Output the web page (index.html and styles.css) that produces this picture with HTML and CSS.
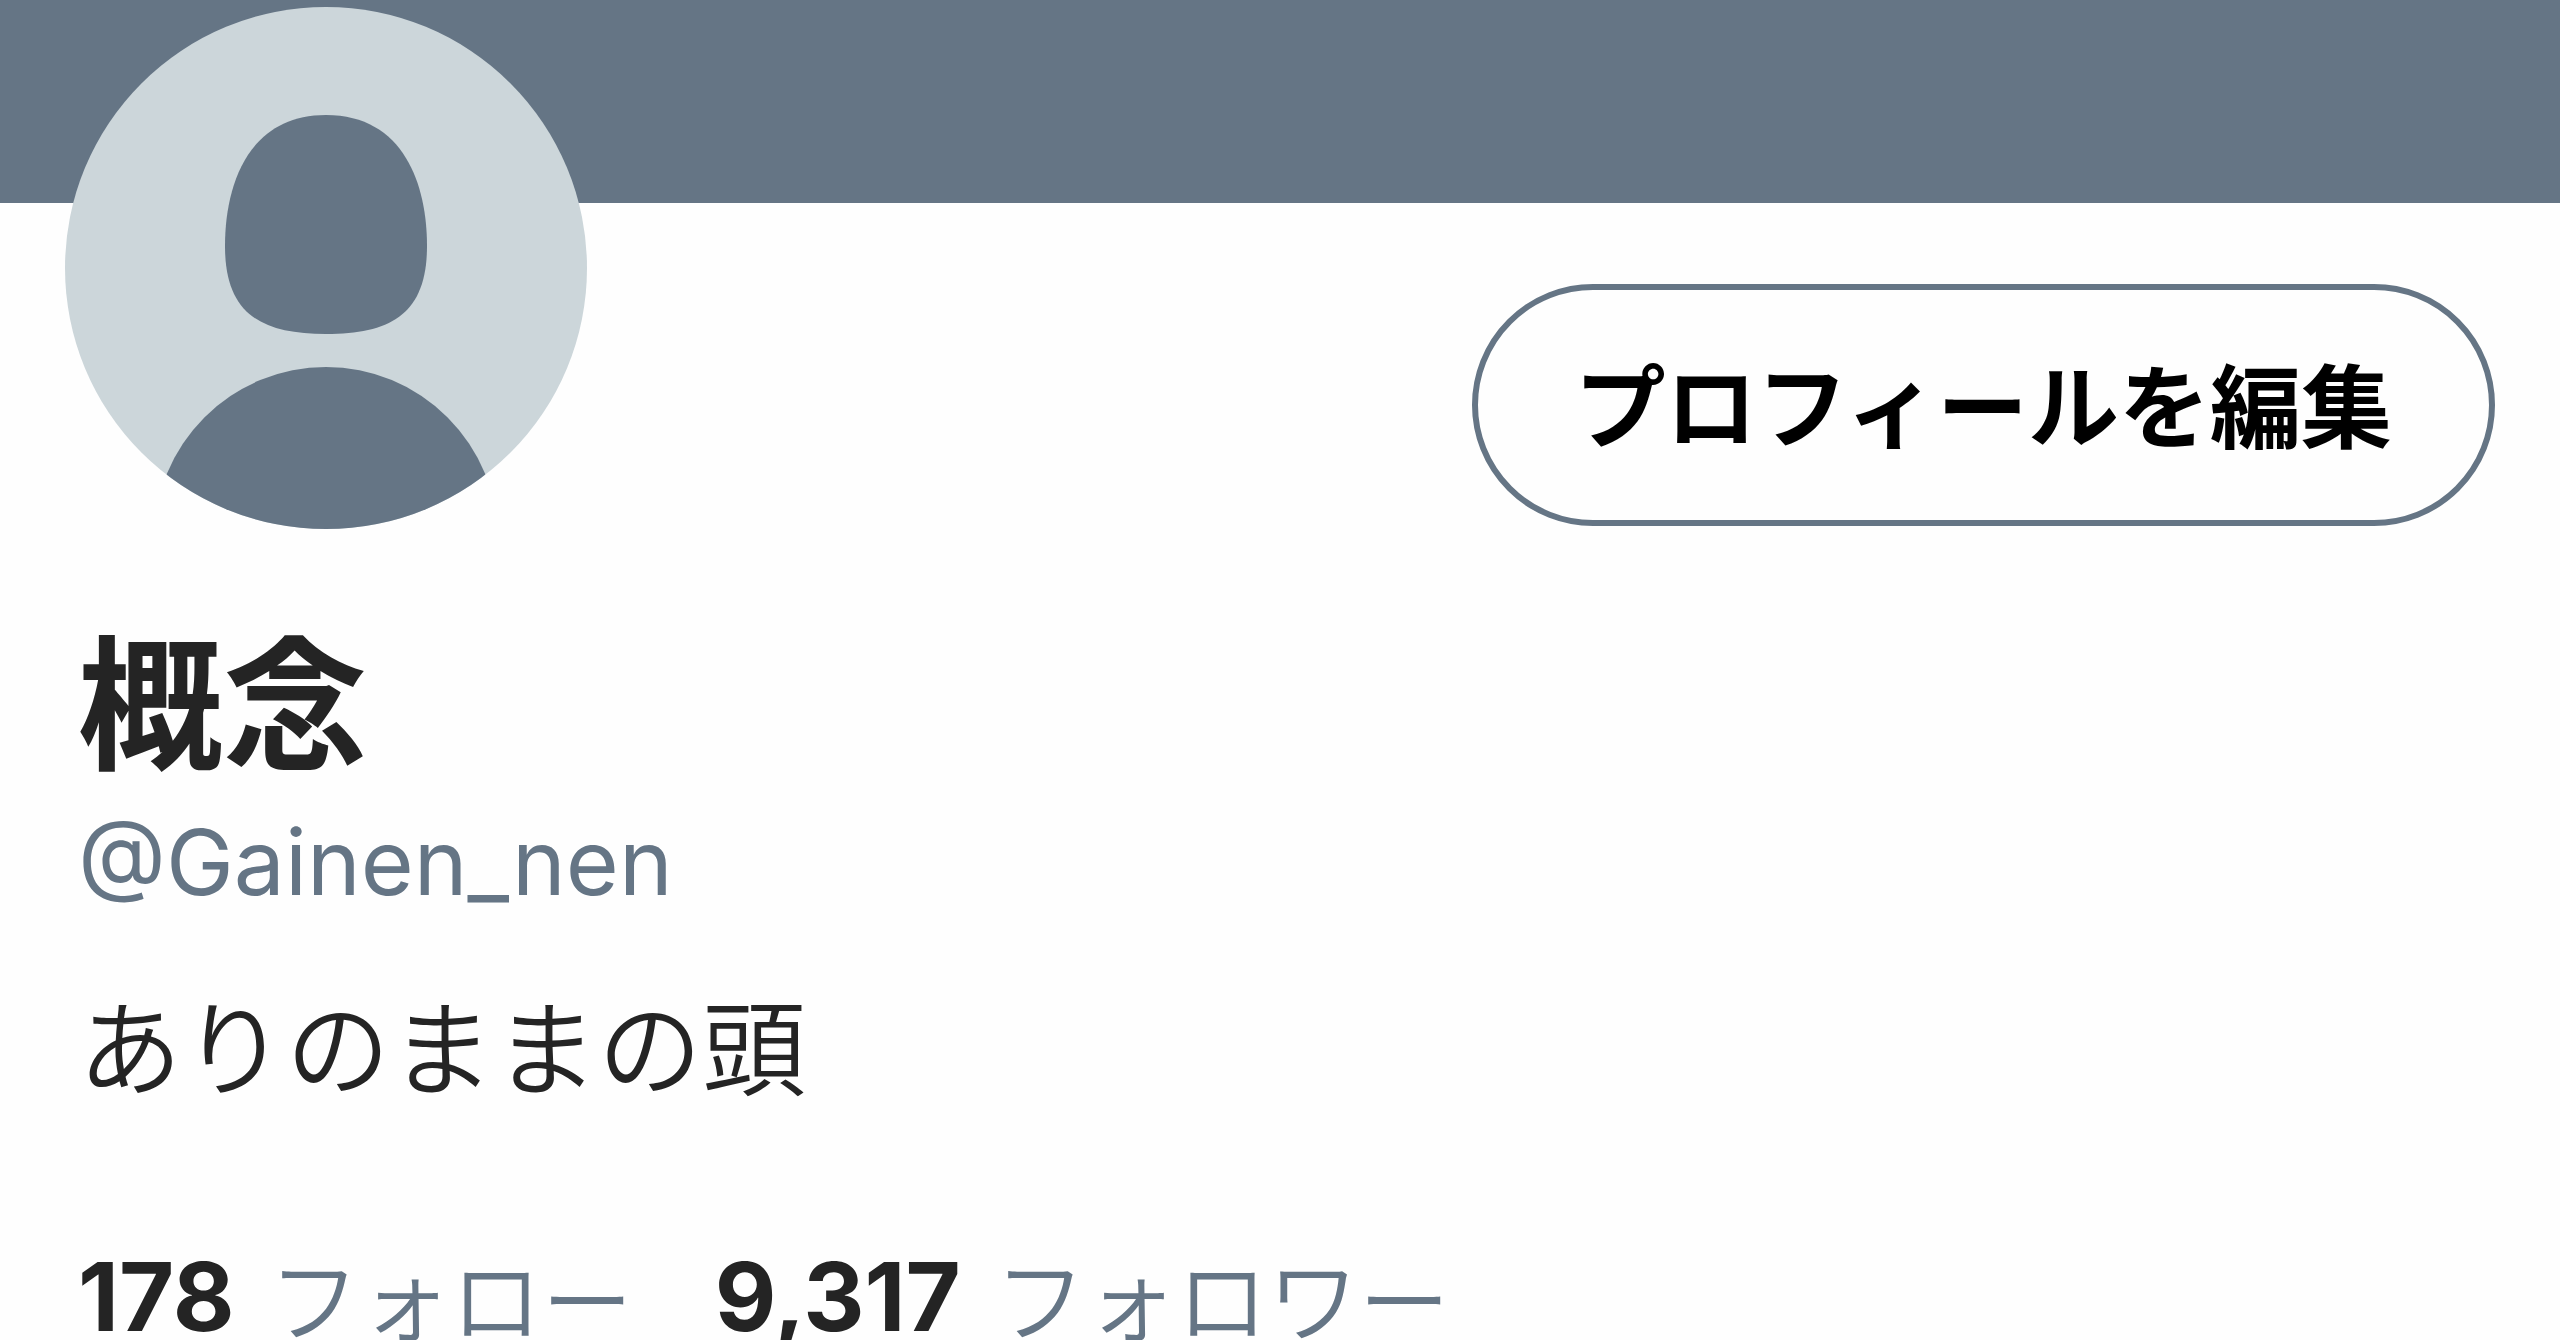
FILE: index.html
```html
<!DOCTYPE html>
<html lang="ja">
<head>
    <meta charset="UTF-8" />
    <meta name="viewport" content="width=device-width, initial-scale=1.0" />
    <title>概念 (@Gainen_nen)</title>
    <link rel="stylesheet" href="styles.css">
</head>
<body>
<div class="banner"></div>
<main class="profile">
    <div class="top">
        <svg class="avatar" viewBox="0 0 522 522" role="img" aria-label="概念">
            <defs>
                <clipPath id="round"><circle cx="261" cy="261" r="261" /></clipPath>
            </defs>
            <g clip-path="url(#round)">
                <rect class="avatar-back" width="522" height="522" />
                <path class="avatar-person" d="M261 108C339 108 362 178 362 239C362 306 327 327 261 327C195 327 160 306 160 239C160 178 183 108 261 108Z" />
                <circle class="avatar-person" cx="261" cy="532" r="172" />
            </g>
        </svg>
        <button class="edit" type="button">プロフィールを編集</button>
    </div>

    <div class="info">
        <h1 class="name">概念</h1>
        <p class="handle">@Gainen_nen</p>
        <p class="bio">ありのままの頭</p>
        <div class="stats">
            <a class="stat" href="#following"><strong>178</strong><span>フォロー</span></a>
            <a class="stat" href="#followers"><strong>9,317</strong><span>フォロワー</span></a>
        </div>
    </div>
</main>
</body>
</html>
```

FILE: styles.css
```css
body {
    margin: 0;
    height: 100vh;
    overflow: hidden;
    font-family: Inter, "Noto Sans CJK JP", sans-serif;
    font-size: 91px;
    background-color: #FEFEFE;
    color: #242424;
}

.banner {
    height: 203px;
    background-color: #657585;
}

.top {
    display: flex;
    justify-content: space-between;
    align-items: flex-end;
    margin-top: -196px;
    padding: 0 65px;
}

.avatar {
    width: 522px;
    height: 522px;
}

.avatar-back {
    fill: #CCD6DA;
}

.avatar-person {
    fill: #657585;
}

.edit {
    margin-bottom: 3px;
    padding: 6px 97px 0;
    border: 6px solid #657585;
    border-radius: 121px;
    background-color: transparent;
    color: #000000;
    font-family: inherit;
    font-size: 91px;
    font-weight: bold;
    line-height: 224px;
}

.info {
    padding: 0 78px;
}

.name {
    margin: 78px 0 0;
    font-size: 145px;
    font-weight: bold;
    line-height: 200px;
}

.handle {
    margin: 0;
    color: #657585;
    line-height: 110px;
}

.bio {
    margin: 58px 0 0;
    font-size: 104px;
    font-weight: 350;
    line-height: 150px;
}

.stats {
    display: flex;
    gap: 82px;
    margin-top: 117px;
    line-height: 120px;
}

.stat {
    display: flex;
    gap: 34px;
    color: #657585;
    font-weight: 350;
    text-decoration: none;
}

.stat strong {
    color: #242424;
    font-size: 95px;
    font-weight: 700;
    line-height: 110px;
}
```
